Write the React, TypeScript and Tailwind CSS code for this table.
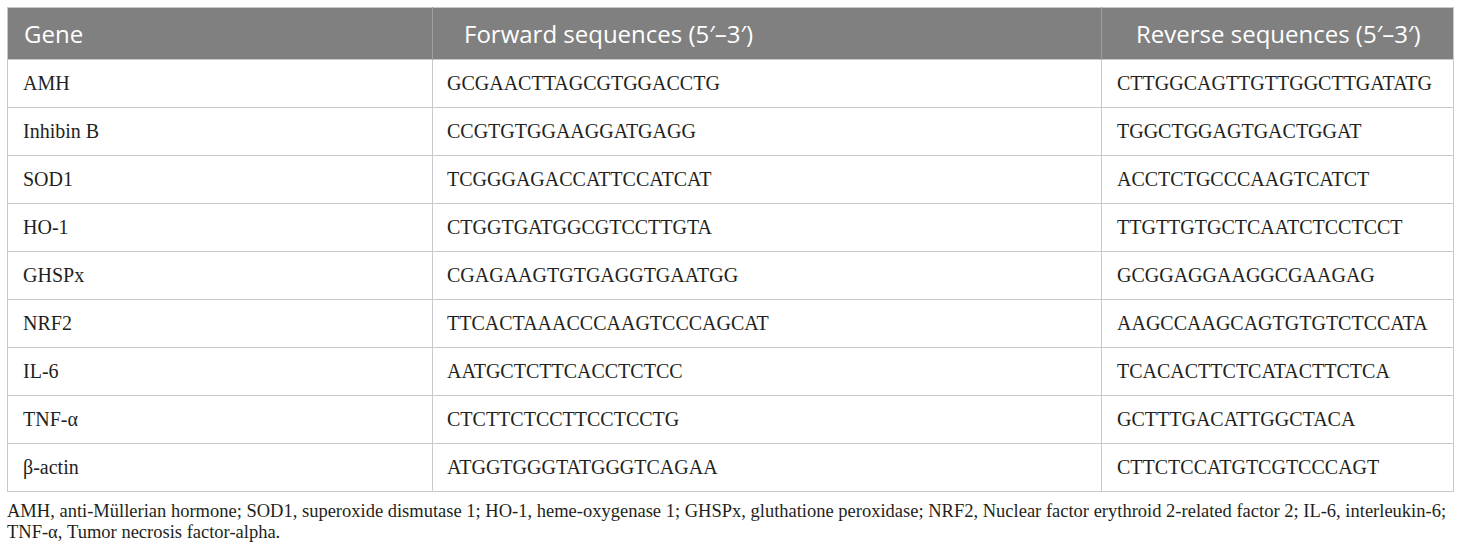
const rows = [
    { gene: 'AMH', fwd: 'GCGAACTTAGCGTGGACCTG', rev: 'CTTGGCAGTTGTTGGCTTGATATG' },
    { gene: 'Inhibin B', fwd: 'CCGTGTGGAAGGATGAGG', rev: 'TGGCTGGAGTGACTGGAT' },
    { gene: 'SOD1', fwd: 'TCGGGAGACCATTCCATCAT', rev: 'ACCTCTGCCCAAGTCATCT' },
    { gene: 'HO-1', fwd: 'CTGGTGATGGCGTCCTTGTA', rev: 'TTGTTGTGCTCAATCTCCTCCT' },
    { gene: 'GHSPx', fwd: 'CGAGAAGTGTGAGGTGAATGG', rev: 'GCGGAGGAAGGCGAAGAG' },
    { gene: 'NRF2', fwd: 'TTCACTAAACCCAAGTCCCAGCAT', rev: 'AAGCCAAGCAGTGTGTCTCCATA' },
    { gene: 'IL-6', fwd: 'AATGCTCTTCACCTCTCC', rev: 'TCACACTTCTCATACTTCTCA' },
    { gene: 'TNF-α', fwd: 'CTCTTCTCCTTCCTCCTG', rev: 'GCTTTGACATTGGCTACA' },
    { gene: 'β-actin', fwd: 'ATGGTGGGTATGGGTCAGAA', rev: 'CTTCTCCATGTCGTCCCAGT' },
];

const App = () => {
    return (
        <div className="min-h-screen bg-white pl-[7px] pt-[7px] pr-[8px]">
            <table className="w-[1446px] table-fixed border-collapse border border-[#c9c9c9]">
                <colgroup>
                    <col className="w-[425px]" />
                    <col className="w-[669px]" />
                    <col className="w-[352px]" />
                </colgroup>
                <thead className="bg-[#808080] text-white font-['Open_Sans',sans-serif] text-[24px]">
                    <tr className="h-[52px]">
                        <th className="pl-[16px] text-left font-normal border-r border-[#a0a0a0]">Gene</th>
                        <th className="pl-[31px] text-left font-normal border-r border-[#a0a0a0]">Forward sequences (5′–3′)</th>
                        <th className="pl-[34px] text-left font-normal">Reverse sequences (5′–3′)</th>
                    </tr>
                </thead>
                <tbody className="text-[#231f20] font-['Liberation_Serif',serif] text-[20px]">
                    {rows.map((r) => (
                        <tr key={r.gene} className="h-[48px] border-t border-[#c9c9c9]">
                            <td className="pl-[15px] pb-[1px] border-r border-[#c9c9c9]">{r.gene}</td>
                            <td className="pl-[14px] pb-[1px] border-r border-[#c9c9c9]">{r.fwd}</td>
                            <td className="pl-[15px] pb-[1px]">{r.rev}</td>
                        </tr>
                    ))}
                </tbody>
            </table>
            <p className="mt-[9px] text-[#231f20] font-['Liberation_Serif',serif] text-[18.5px] leading-[21px]">
                AMH, anti-Müllerian hormone; SOD1, superoxide dismutase 1; HO-1, heme-oxygenase 1; GHSPx, gluthatione peroxidase; NRF2, Nuclear factor erythroid 2-related factor 2; IL-6, interleukin-6;
                <br />
                TNF-α, Tumor necrosis factor-alpha.
            </p>
        </div>
    );
};

export default App;
